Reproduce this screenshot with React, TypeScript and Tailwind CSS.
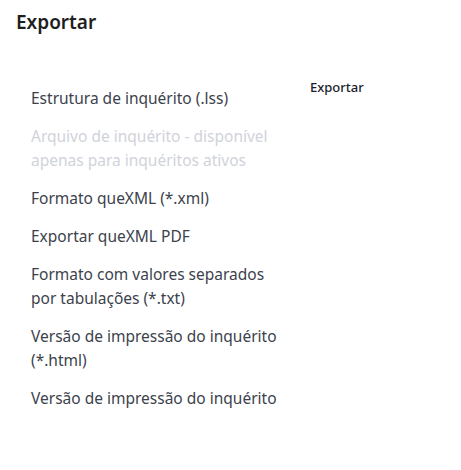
import React from "react";

const items: { label: string; disabled?: boolean }[] = [
  { label: "Estrutura de inquérito (.lss)" },
  { label: "Arquivo de inquérito - disponível apenas para inquéritos ativos", disabled: true },
  { label: "Formato queXML (*.xml)" },
  { label: "Exportar queXML PDF" },
  { label: "Formato com valores separados por tabulações (*.txt)" },
  { label: "Versão de impressão do inquérito (*.html)" },
  { label: "Versão de impressão do inquérito" },
];

export default function App() {
  return (
    <div className="w-[461px] h-[470px] bg-white px-4 pt-2 font-['Noto_Sans',sans-serif]">
      <h2 className="text-[19px] leading-[28px] font-semibold text-[#1e1e1e]">Exportar</h2>
      <div className="flex items-start mt-[43px]">
        <ul className="w-[270px] shrink-0 pl-[15px]">
          {items.map((it) => (
            <li
              key={it.label}
              className={
                "py-[7px] text-[15.5px] leading-6 " +
                (it.disabled ? "text-[#d0d3da]" : "text-[#3c424c]")
              }
            >
              {it.label}
            </li>
          ))}
        </ul>
        <div className="ml-[24px] mt-[-2px] text-[13px] leading-5 font-medium text-[#1a1d2b]">Exportar</div>
      </div>
    </div>
  );
}
